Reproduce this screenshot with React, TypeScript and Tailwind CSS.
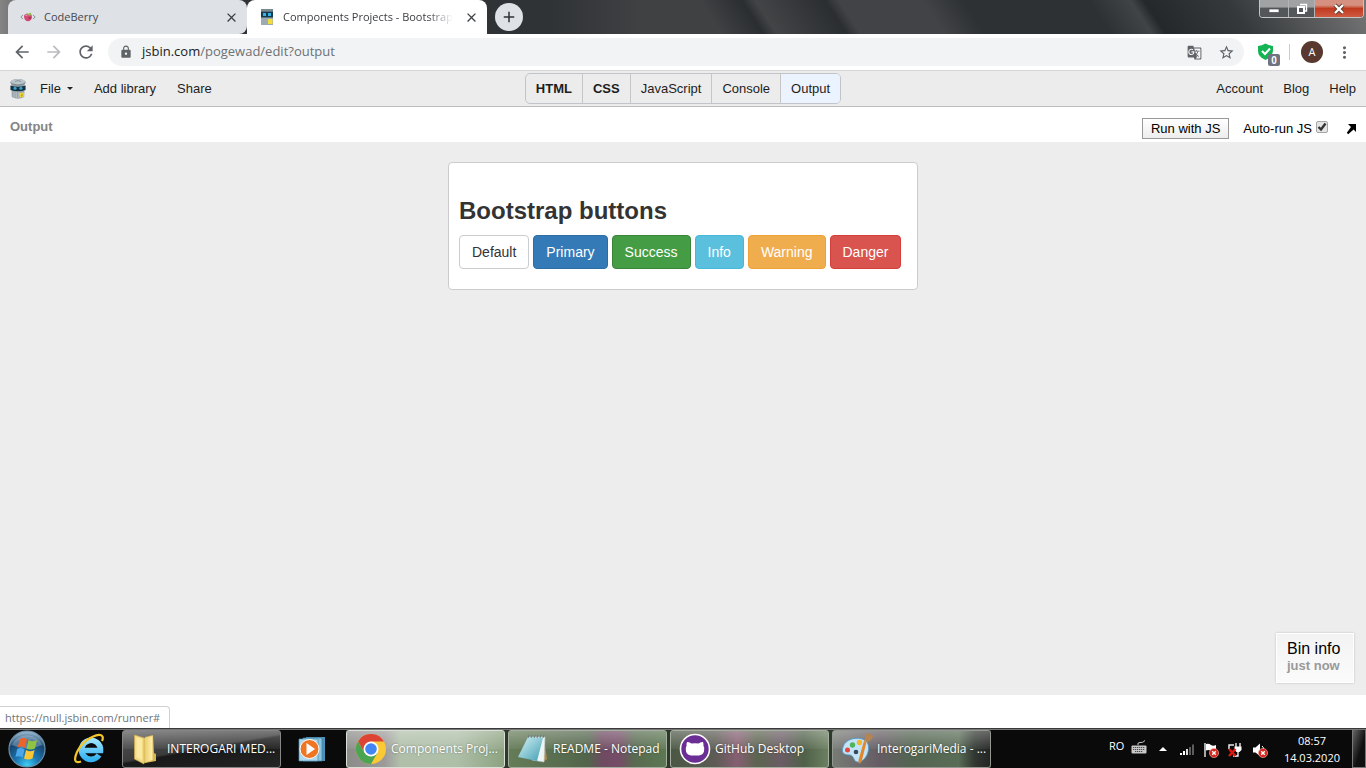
import React from "react";
import {
  MdAdd,
  MdArrowBack,
  MdArrowForward,
  MdClose,
  MdGTranslate,
  MdLock,
  MdMoreVert,
  MdRefresh,
  MdStarBorder,
} from "react-icons/md";

function CodeBerryIcon() {
  return (
    <svg viewBox="0 0 16 16" className="size-4 shrink-0" aria-hidden="true">
      <path d="M3 6 L0.8 8 L3 10 M13 6 L15.2 8 L13 10" fill="none" stroke="#8d939b" strokeWidth="1" />
      <path d="M4 7.5 C4 4.5 7 4.3 8 5 C9.5 4.2 12 5 12 8 C12 10.5 10 12.2 8 12.2 C6 12.2 4 10.5 4 7.5Z" fill="#d24a72" />
      <path d="M5 6 C6 5 7 5.4 7.6 6.2 C6.8 7.5 5.5 7.5 5 6Z" fill="#eb96ae" />
      <circle cx="9.8" cy="9" r="1.2" fill="#b02d57" />
      <path d="M6.5 3.6 L8.4 5 L10.5 3.4 L11.6 5.4 L10 6.8 L7.6 6Z" fill="#8cc152" />
    </svg>
  );
}

function JsBinFavicon() {
  return (
    <svg viewBox="0 0 16 16" className="size-4 shrink-0" aria-hidden="true">
      <path d="M2 0 H14 V16 H2Z" fill="#9caab2" />
      <rect x="2" y="0" width="12" height="2" fill="#7b8990" />
      <rect x="2" y="2.5" width="12" height="6" fill="#173b4d" />
      <rect x="4" y="4" width="3" height="3" fill="#35b4e8" />
      <rect x="9" y="4" width="3" height="3" fill="#35b4e8" />
      <rect x="9" y="10" width="4.5" height="5" fill="#f2dc3c" />
    </svg>
  );
}

function JsBinLogo() {
  return (
    <svg viewBox="0 0 18 24" className="h-6 w-4 shrink-0" aria-hidden="true">
      <path d="M1.5 5 H16.500 L16 21 Q9 25 2 21Z" fill="#98a5ac" />
      <path d="M4.500 15 V21 M7 15 V22 M10 15 V22" stroke="#bcc6cb" strokeWidth="1" />
      <ellipse cx="9" cy="4.600" rx="8.500" ry="3.800" fill="#7f8d95" />
      <ellipse cx="9" cy="3.800" rx="8" ry="3" fill="#bcc6ca" />
      <path d="M5.500 3.600 Q9 1.400 12.500 3.600" fill="none" stroke="#7f8d95" strokeWidth="1" />
      <path d="M0.500 8 Q9 11 17.500 8 V13 Q9 16 0.500 13Z" fill="#153242" />
      <circle cx="5.700" cy="11.200" r="1.700" fill="#36a5d0" />
      <circle cx="12.300" cy="11.200" r="1.700" fill="#36a5d0" />
      <path d="M10.500 16.500 L15.500 16 V20.800 L11 21.600Z" fill="#f0da38" />
      <path d="M13.500 17.500 V20 L12.300 19.600" fill="none" stroke="#7b711c" strokeWidth="0.700" />
    </svg>
  );
}

function WindowControls() {
  return (
    <div className="mr-[2px] ml-auto flex h-[18px] overflow-hidden rounded-b-[4px] border border-t-0 border-[#c2c4c6] bg-[#33373a]">
      <button aria-label="Minimize" className="flex w-[29px] items-center justify-center border-r border-[#b2b4b6] bg-linear-to-b from-[#a0a2a4] from-40% to-[#53575a] to-50%">
        <svg viewBox="0 0 12 8" className="mt-0.5 h-2 w-3">
          <rect x="1" y="3" width="10" height="3.5" fill="#fff" stroke="#4a4d50" strokeWidth="0.7" />
        </svg>
      </button>
      <button aria-label="Restore" className="flex w-[26px] items-center justify-center border-r border-[#b2b4b6] bg-linear-to-b from-[#a0a2a4] from-40% to-[#53575a] to-50%">
        <svg viewBox="0 0 12 12" className="size-3">
          <path d="M4 1.500 H10.500 V8 H8.500" fill="none" stroke="#fff" strokeWidth="1.400" />
          <rect x="2" y="4" width="6" height="6" fill="#55595c" stroke="#fff" strokeWidth="2" />
        </svg>
      </button>
      <button aria-label="Close" className="flex w-[48px] items-center justify-center bg-linear-to-b from-[#d6907f] from-30% via-[#c03a20] via-50% to-[#cf5a40]">
        <svg viewBox="0 0 12 12" className="size-3">
          <path d="M2 2 L10 10 M10 2 L2 10" stroke="#54392f" strokeWidth="4" />
          <path d="M2 2 L10 10 M10 2 L2 10" stroke="#fff" strokeWidth="2.4" />
        </svg>
      </button>
    </div>
  );
}

function TabStrip() {
  return (
    <div className="flex h-[34px] shrink-0 items-start bg-[linear-gradient(90deg,#858585_0px,#6a6a6a_20px,#303335_120px,#303335_550px,#3f4143_640px,#3f4143_100%)]">
      <div className="relative flex h-full w-full bg-[linear-gradient(57deg,transparent_0%,transparent_52%,#2b2e31_55%,#424446_56%,#2b2e31_61%,#424346_62%,#424346_68%,#2d3133_71%,#2d3133_80%,#404446_83%,#25282a_84%,#35393b_90%,#777_100%)]">
        <div className="ml-2 flex w-[239px] items-center rounded-t-lg rounded-br-lg bg-[#dee1e6] pr-2 pl-3">
          <CodeBerryIcon />
          <span className="ml-2 flex-1 text-[11px] text-[#45494d]">CodeBerry</span>
          <button aria-label="Close CodeBerry tab" className="text-[#3c4043]">
            <MdClose size={15} />
          </button>
        </div>
        <div className="flex w-[240px] items-center rounded-t-lg bg-white pr-2 pl-3">
          <JsBinFavicon />
          <span className="ml-2 mask-r-from-85% text-[11px] whitespace-nowrap text-[#3c4043]">
            Components Projects - Bootstrap
          </span>
          <button aria-label="Close Components Projects tab" className="ml-auto text-[#3c4043]">
            <MdClose size={15} />
          </button>
        </div>
        <button aria-label="New tab" className="mt-[3px] ml-2 flex size-7 items-center justify-center rounded-full bg-[#dee1e6] text-[#2f3235]">
          <MdAdd size={18} />
        </button>
        <WindowControls />
      </div>
    </div>
  );
}

function AddressBar() {
  return (
    <div className="flex h-9 shrink-0 items-center bg-white pr-3 pl-3 text-[#5f6368]">
      <button aria-label="Back" className="flex size-5 items-center justify-center">
        <MdArrowBack size={20} />
      </button>
      <button aria-label="Forward" className="ml-3 flex size-5 items-center justify-center text-[#babcbe]">
        <MdArrowForward size={20} />
      </button>
      <button aria-label="Reload" className="ml-3 flex size-5 items-center justify-center">
        <MdRefresh size={20} />
      </button>
      <div className="ml-3 flex h-7 flex-1 items-center rounded-full bg-[#f1f3f4] pr-[9px] pl-[11px]">
        <MdLock size={14} />
        <p className="ml-[9px] flex-1 text-[13px] text-[#6d7175]">
          <span className="text-[#202124]">jsbin.com</span>/pogewad/edit?output
        </p>
        <button aria-label="Translate this page">
          <MdGTranslate size={15} />
        </button>
        <button aria-label="Bookmark this page" className="ml-4">
          <MdStarBorder size={17} />
        </button>
      </div>
      <button aria-label="Extension" className="relative ml-3 size-6">
        <svg viewBox="0 0 24 24" className="size-6" aria-hidden="true">
          <path d="M2 6 Q6 5.500 9.500 3.500 Q13 5.500 17 6 V11 Q16.500 17 9.500 20 Q2 17 2 11Z" fill="#14b455" />
          <path d="M6 11 L9 14 L14 8.500" fill="none" stroke="#fff" strokeWidth="2" />
        </svg>
        <span className="absolute top-[14px] left-3 flex h-3 w-3 items-center justify-center rounded-[2px] bg-[#6f7480] font-['Liberation_Sans'] text-[10px] font-bold text-white">
          0
        </span>
      </button>
      <div className="ml-[9px] h-4 w-px bg-[#c9cbce]" />
      <button aria-label="Profile" className="ml-[11px] flex size-[22px] items-center justify-center rounded-full bg-[#59382f] text-[11px] text-white">
        A
      </button>
      <button aria-label="Browser menu" className="ml-3">
        <MdMoreVert size={19} />
      </button>
    </div>
  );
}

const panels = [
  { name: "HTML", style: "font-bold" },
  { name: "CSS", style: "font-bold" },
  { name: "JavaScript", style: "" },
  { name: "Console", style: "" },
  { name: "Output", style: "bg-[#ebf3ff]" },
];

function JsBinNav() {
  return (
    <header className="grid h-[37px] shrink-0 grid-cols-[1fr_auto_1fr] items-center border-t border-b border-t-[#d5d5d5] border-b-[#bcbcbc] bg-[#ececec] px-[10px] text-[13px] text-[#1d1d1d]">
      <div className="flex items-center">
        <JsBinLogo />
        <button className="ml-3.5 flex items-center gap-1.5">
          File
          <span className="border-x-[3px] border-t-[3px] border-x-transparent border-t-[#222]" />
        </button>
        <button className="ml-[21px]">Add library</button>
        <button className="ml-[21px]">Share</button>
      </div>
      <div className="flex h-[31px] divide-x divide-[#c6c6c6] overflow-hidden rounded-[5px] border border-[#c1c5ca]">
        {panels.map((p) => (
          <button key={p.name} className={`px-[10px] ${p.style}`}>
            {p.name}
          </button>
        ))}
      </div>
      <nav className="flex justify-end gap-5">
        <a href="#account">Account</a>
        <a href="#blog">Blog</a>
        <a href="#help">Help</a>
      </nav>
    </header>
  );
}

function OutputHeader() {
  return (
    <div className="flex h-[35px] shrink-0 items-center bg-white pr-2 pl-[10px] text-[13px] text-black">
      <h2 className="mb-[-5px] flex-1 text-[13px] font-bold text-[#858585]">Output</h2>
      <div className="flex items-center pt-2">
        <button className="h-[21px] border border-[#999] bg-linear-to-b from-white to-[#ededed] px-2 leading-none">
          Run with JS
        </button>
        <label htmlFor="autorun" className="ml-3.5">
          Auto-run JS
        </label>
        <span className="relative mb-1 ml-1 size-3">
          <input id="autorun" type="checkbox" defaultChecked className="peer block size-3 appearance-none rounded-[2px] border border-[#a6a6a6] bg-[#e4e4e4]" />
          <svg viewBox="0 0 12 12" className="pointer-events-none absolute inset-0 hidden size-3 peer-checked:block">
            <path d="M2.500 6 L5 8.500 L9.500 2.500" fill="none" stroke="#333" strokeWidth="2.400" />
          </svg>
        </span>
        <a href="#popout" aria-label="Open output in a new window" className="ml-4">
          <svg viewBox="0 0 14 14" className="size-3.5">
            <path d="M4 2 H12 V10 L9.600 7.600 L4.200 12.200 L2.800 10.800 L7 5Z" fill="#000" />
          </svg>
        </a>
      </div>
    </div>
  );
}

const samples = [
  { label: "Default", style: "border-[#ccc] bg-white text-[#333]" },
  { label: "Primary", style: "border-[#2e6da4] bg-[#337ab7] text-white" },
  { label: "Success", style: "border-[#398439] bg-[#449d44] text-white" },
  { label: "Info", style: "border-[#46b8da] bg-[#5bc0de] text-white" },
  { label: "Warning", style: "border-[#eea236] bg-[#f0ad4e] text-white" },
  { label: "Danger", style: "border-[#d43f3a] bg-[#d9534f] text-white" },
];

function OutputArea() {
  return (
    <main className="relative flex-1 bg-[#ededed] pt-5">
      <section className="mx-auto w-[470px] rounded-[4px] border border-[#ccc] bg-white px-[10px] pt-[34px] pb-5">
        <h3 className="mb-[11px] text-[24px] leading-[27px] font-bold text-[#333]">Bootstrap buttons</h3>
        <div className="flex gap-1">
          {samples.map((s) => (
            <button key={s.label} className={`h-[34px] rounded-[4px] border px-3 text-[14px] ${s.style}`}>
              {s.label}
            </button>
          ))}
        </div>
      </section>
      <aside className="absolute right-3 bottom-3 h-[50px] w-[78px] border border-white bg-linear-to-b from-[#f3f3f3] to-[#fbfbfb] pt-1.5 pl-[10px] shadow-[0_0_2px_#bbb]">
        <p className="text-[16px] leading-[18px] text-black">Bin info</p>
        <p className="text-[13px] leading-[16px] font-bold whitespace-nowrap text-[#999]">just now</p>
      </aside>
    </main>
  );
}

function StartOrb() {
  return (
    <svg viewBox="0 0 38 38" className="size-[38px]" aria-hidden="true">
      <defs>
        <radialGradient id="orb" cx="50%" cy="95%" r="90%">
          <stop offset="0" stopColor="#3fd0f5" />
          <stop offset="0.35" stopColor="#1c79b5" />
          <stop offset="0.75" stopColor="#17456f" />
          <stop offset="1" stopColor="#8fb0c8" />
        </radialGradient>
      </defs>
      <circle cx="19" cy="19" r="18" fill="url(#orb)" stroke="#6b8fa8" strokeWidth="1.200" />
      <path d="M4 15 A16 15 0 0 1 34 15 Q19 22 4 15Z" fill="#c9dbe8" opacity="0.35" />
      <path d="M12 9 Q15.500 7 19 9.500 L17 18 Q13.500 15.500 9.500 17.500Z" fill="#ee6329" />
      <path d="M20.500 10 Q24.500 12.500 29 10 L27 18.500 Q22.500 20.500 18.500 18.500Z" fill="#8fc341" />
      <path d="M9.200 19 Q13 17 16.600 19.500 L14.600 27.500 Q11 25.500 7.500 27Z" fill="#4ba6ea" />
      <path d="M18 20 Q22 22.500 26.600 20 L24.500 28.500 Q20 30.500 16 28.500Z" fill="#fac636" />
    </svg>
  );
}

function ExplorerE() {
  return (
    <svg viewBox="0 0 32 32" className="size-8" aria-hidden="true">
      <defs>
        <linearGradient id="ieBlue" x1="0" y1="0" x2="0" y2="1">
          <stop offset="0" stopColor="#9be2ff" />
          <stop offset="1" stopColor="#35b2f2" />
        </linearGradient>
      </defs>
      <path d="M25 22 A9.500 9.500 0 1 1 26.500 17.500 H10" fill="none" stroke="url(#ieBlue)" strokeWidth="5.600" />
      <path d="M7 28.500 C0 31 0 26 3 19 C8 9 18 2.500 25 1.800 C29 1.500 29.500 5 28 8" fill="none" stroke="#f3c62b" strokeWidth="2.200" />
    </svg>
  );
}

function MediaPlayer() {
  return (
    <svg viewBox="0 0 28 28" className="size-7" aria-hidden="true">
      <path d="M8 2 H27 V26 H8Z" fill="#4c91ba" />
      <path d="M5 3 H24 V26 H5Z" fill="#8cc5e0" stroke="#3f7e9f" strokeWidth="0.700" />
      <path d="M1 4 H20 V26 H1Z" fill="#acd9ed" stroke="#4c8cad" strokeWidth="0.700" />
      <circle cx="11.500" cy="14" r="9.500" fill="#ef7523" stroke="#fff" strokeWidth="1" />
      <path d="M8.500 8 L17 14 L8.500 20Z" fill="#fff" />
    </svg>
  );
}

function FolderIcon() {
  return (
    <svg viewBox="0 0 30 32" className="h-8 w-[30px] shrink-0" aria-hidden="true">
      <defs>
        <linearGradient id="folder" x1="0" y1="0" x2="1" y2="0">
          <stop offset="0" stopColor="#e8c969" />
          <stop offset="1" stopColor="#fff0ad" />
        </linearGradient>
      </defs>
      <path d="M13 4 L21 2 L22 20 L24 21 V28 L13 30Z" fill="#d9b852" />
      <path d="M12 5 L20.500 3 V27 L12 30Z" fill="url(#folder)" />
      <path d="M2.500 2 L12 5 V31 L2.500 26Z" fill="#f4da83" stroke="#cfac4b" strokeWidth="0.700" />
      <path d="M4.500 4 L10 6 V27 L4.500 24Z" fill="#fae9a5" />
    </svg>
  );
}

function ChromeIcon() {
  return (
    <svg viewBox="0 0 30 30" className="size-[30px] shrink-0" aria-hidden="true">
      <circle cx="15" cy="15" r="15" fill="#fbc934" />
      <path d="M2 7.500 A15 15 0 0 1 28 7.500 H15 L8.500 18.750Z" fill="#de4436" />
      <path d="M2 7.500 A15 15 0 0 0 15 30 L21.500 18.750 L15 22 L8.500 18.750Z" fill="#4aa451" />
      <circle cx="15" cy="15" r="7.500" fill="#fff" />
      <circle cx="15" cy="15" r="5.800" fill="#4285f4" />
    </svg>
  );
}

function NotepadIcon() {
  return (
    <svg viewBox="0 0 32 30" className="h-[30px] w-8 shrink-0" aria-hidden="true">
      <defs>
        <linearGradient id="note" x1="0" y1="0" x2="1" y2="1">
          <stop offset="0" stopColor="#d6f3f5" />
          <stop offset="1" stopColor="#419eb4" />
        </linearGradient>
      </defs>
      <path d="M27 4 L30 25 L26 28 L24 4Z" fill="#b58a4d" />
      <path d="M11 3 H28 L27 28 L15 26Z" fill="#edf4f6" stroke="#b8c9ce" strokeWidth="0.600" />
      <path d="M11 3 L26 4 L20 27 L1 23Z" fill="url(#note)" />
      <path d="M11 4 L12 1 M14 4 L15 1 M17 4 L18 1 M20 4 L21 1 M23 4 L24 1 M26 4 L27 1" stroke="#687d82" strokeWidth="1" />
    </svg>
  );
}

function GitHubDesktopIcon() {
  return (
    <svg viewBox="0 0 32 32" className="size-8 shrink-0" aria-hidden="true">
      <circle cx="16" cy="16" r="14.500" fill="#6b2e94" stroke="#fff" strokeWidth="1.600" />
      <path d="M8 9 Q10 8.500 12.500 10.500 Q16 10 19.500 10.500 Q22 8.500 24 9 Q24.800 11 24.400 12.500 Q26 15 25 18.500 Q24 22 20 22.500 H12 Q8 22 7 18.500 Q6 15 7.600 12.500 Q7.200 11 8 9Z" fill="#fff" />
    </svg>
  );
}

function PaintIcon() {
  return (
    <svg viewBox="0 0 32 32" className="size-8 shrink-0" aria-hidden="true">
      <path d="M2 14 C4 6 16 3 24 7 C31 12 27 27 18 29 C12 30 14 23 9 22 C3 22 0 20 2 14Z" fill="#c3e4f6" stroke="#5b99c5" strokeWidth="1" />
      <circle cx="11.500" cy="12" r="2.700" fill="#4fb35a" />
      <circle cx="18.500" cy="9.500" r="2.700" fill="#f5b634" />
      <circle cx="6.500" cy="17" r="2.500" fill="#e2483d" />
      <circle cx="15" cy="19" r="2.300" fill="#36495c" />
      <path d="M25.500 9 L20.500 29 L18 31 L17.500 27 L23 8Z" fill="#e2862b" />
      <path d="M23 8 Q25 5 24 2 L27 0 L32 3 Q31 7 27 9Z" fill="#b58453" />
    </svg>
  );
}

const tasks = [
  {
    label: "Components Proj...",
    icon: <ChromeIcon />,
    style: "border-[#d8e0d5] bg-[linear-gradient(90deg,#8b8b88_0%,#9e9a9b_24%,#b0bfa9_34%,#aebfa8_70%,#8da382_100%)]",
  },
  {
    label: "README - Notepad",
    icon: <NotepadIcon />,
    style: "border-[#a5afa0] bg-[linear-gradient(90deg,#657c58_0%,#52654b_50%,#6f4a62_60%,#754c67_70%,#586b50_80%,#5c7853_100%)]",
  },
  {
    label: "GitHub Desktop",
    icon: <GitHubDesktopIcon />,
    style: "border-[#a5afa0] bg-[linear-gradient(90deg,#4b5744_0%,#5c5b54_28%,#865f72_42%,#5c654f_55%,#6b5c65_70%,#506149_85%,#6b8060_100%)]",
  },
  {
    label: "InterogariMedia - ...",
    icon: <PaintIcon />,
    style: "border-[#939991] bg-[linear-gradient(90deg,#777b75_0%,#655c63_30%,#536551_50%,#596c56_80%,#323832_90%,#242424_100%)]",
  },
];

function TaskButton({ label, icon, style }: { label: string; icon: React.ReactNode; style: string }) {
  return (
    <button className={`relative flex h-[38px] w-[159px] items-center overflow-hidden rounded-[3px] border pl-2 text-left text-white ${style}`}>
      <span className="absolute inset-x-0 top-0 h-1/2 bg-linear-to-b from-white/30 to-white/5" />
      <span className="relative flex w-8 justify-center">{icon}</span>
      <span className="relative ml-1 whitespace-nowrap [text-shadow:0_0_2px_#0006]">{label}</span>
    </button>
  );
}

function RedCross() {
  return (
    <g>
      <circle cx="11" cy="11" r="4.600" fill="#d5271d" stroke="#f5b3ae" strokeWidth="0.600" />
      <path d="M9.200 9.200 L12.800 12.800 M12.800 9.200 L9.200 12.800" stroke="#fff" strokeWidth="1.400" />
    </g>
  );
}

function Tray() {
  return (
    <div className="ml-auto flex h-full items-center text-[11px] text-white">
      <span className="mb-1 w-[22px]">RO</span>
      <svg viewBox="0 0 16 16" className="mb-1 size-4" aria-hidden="true">
        <path d="M7 6 Q6 3.500 9 3.500 Q12 4 14 1.500" fill="none" stroke="#c8c8c8" strokeWidth="1" />
        <rect x="0.500" y="6.500" width="15" height="8" rx="1" fill="#c8c8c8" />
        <path d="M2 8.500 H14 M2 10.500 H14 M4 12.500 H12" stroke="#4b4b4b" strokeWidth="1" strokeDasharray="1.300 0.700" />
      </svg>
      <button aria-label="Show hidden icons" className="ml-3 border-x-4 border-b-4 border-x-transparent border-b-white" />
      <div className="ml-3 flex items-center gap-2 pt-0.5">
        <svg viewBox="0 0 16 16" className="size-4" aria-hidden="true">
          <path d="M2 13 V11 M5 13 V9" stroke="#fff" strokeWidth="2" />
          <path d="M8 13 V7" stroke="#ddd" strokeWidth="2" />
          <path d="M11 13 V5 M14 13 V2.500" stroke="#5c5c5c" strokeWidth="2" />
        </svg>
        <svg viewBox="0 0 16 16" className="size-4" aria-hidden="true">
          <path d="M2 1 V15" stroke="#fff" strokeWidth="1.300" />
          <path d="M3 2 Q6 1 8 3 Q10 4.500 13 3 V9 Q10 10.500 8 9 Q6 7.500 3 8.500Z" fill="#fff" />
          <RedCross />
        </svg>
        <svg viewBox="0 0 16 16" className="size-4" aria-hidden="true">
          <path d="M7 3 H2 V7 M9 14 H6" fill="none" stroke="#e8e8e8" strokeWidth="1.500" />
          <path d="M9 1 V5 M13 1 V5" stroke="#fff" strokeWidth="1.300" />
          <path d="M7.500 4.500 H14.500 V8 L12.500 10 H9.500 L7.500 8Z" fill="#fff" />
          <path d="M11 10 V14 H8" fill="none" stroke="#fff" strokeWidth="1.300" />
          <path d="M2 7 L8.500 14 M8.500 7 L2 14" stroke="#e0170f" strokeWidth="2.400" />
        </svg>
        <svg viewBox="0 0 16 16" className="ml-px size-4" aria-hidden="true">
          <path d="M1 5.500 H3.500 L8 1.500 V14 L3.500 10.500 H1Z" fill="#fff" />
          <path d="M10 4 Q11.500 5 11.500 7" fill="none" stroke="#fff" strokeWidth="1" />
          <RedCross />
        </svg>
      </div>
      <div className="ml-4 text-center leading-[17px]">
        <p>08:57</p>
        <p>14.03.2020</p>
      </div>
      <button aria-label="Show desktop" className="ml-3 h-full w-3.5 border border-[#777] bg-linear-to-br from-[#666] to-[#101010] to-60%" />
    </div>
  );
}

function Taskbar() {
  return (
    <footer className="flex h-10 shrink-0 items-center border-t border-[#3a3a3a] bg-[#0a0a0b] pl-2 font-['Open_Sans',sans-serif] text-[12px] shadow-[inset_0_1px_0_#777]">
      <button aria-label="Start">
        <StartOrb />
      </button>
      <button aria-label="Internet Explorer" className="ml-7">
        <ExplorerE />
      </button>
      <div className="ml-4">
        <TaskButton
          label="INTEROGARI MED..."
          icon={<FolderIcon />}
          style="border-[#858585] bg-[linear-gradient(170deg,#555_0%,#3b3b3b_48%,#191919_52%,#242424_100%)]"
        />
      </div>
      <button aria-label="Windows Media Player" className="ml-[17px]">
        <MediaPlayer />
      </button>
      <div className="ml-5 flex gap-[3px] bg-[#2e382b]">
        {tasks.map((t) => (
          <TaskButton key={t.label} {...t} />
        ))}
      </div>
      <Tray />
    </footer>
  );
}

export default function App() {
  return (
    <div className="flex min-h-screen flex-col bg-white font-['Liberation_Sans',Arial,sans-serif]">
      <div className="font-['Open_Sans',sans-serif]">
        <TabStrip />
        <AddressBar />
      </div>
      <JsBinNav />
      <OutputHeader />
      <OutputArea />
      <div className="flex h-[33px] shrink-0 items-end bg-white">
        <p className="rounded-tr-[4px] border-t border-r border-[#d0d0d0] pr-[9px] pl-[5px] font-['Open_Sans',sans-serif] text-[11px] leading-[21px] text-[#70757a]">
          https://null.jsbin.com/runner#
        </p>
      </div>
      <Taskbar />
    </div>
  );
}
